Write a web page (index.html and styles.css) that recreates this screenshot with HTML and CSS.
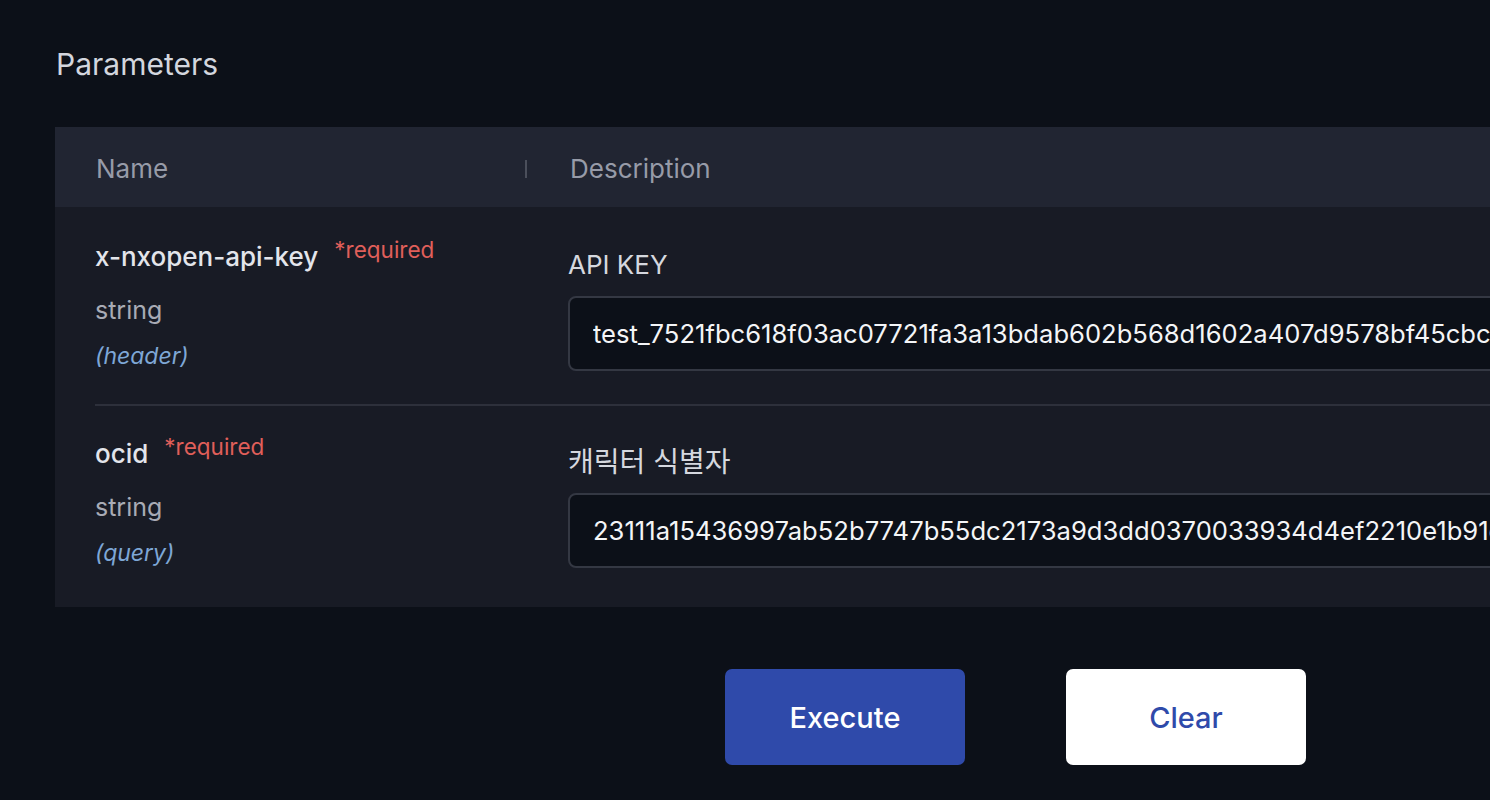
FILE: index.html
```html
<!DOCTYPE html>
<html lang="ko">
<head>
<meta charset="utf-8">
<title>Parameters</title>
<link rel="stylesheet" href="styles.css">
</head>
<body>
<div class="page">
  <h2 class="title">Parameters</h2>
  <div class="table">
    <div class="thead">
      <div class="th th-name"><span>Name</span><span class="divider"></span></div>
      <div class="th th-desc">Description</div>
    </div>
    <div class="tbody">
      <div class="row">
        <div class="cell-name">
          <div class="pname">x-nxopen-api-key<span class="req">*required</span></div>
          <div class="ptype">string</div>
          <div class="pin">(header)</div>
        </div>
        <div class="cell-desc">
          <div class="pdesc">API KEY</div>
          <input class="field" type="text" value="test_7521fbc618f03ac07721fa3a13bdab602b568d1602a407d9578bf45cbc0e9a0c7e6cefe8d04e6d233bd35cf2fabdeb93fb">
        </div>
      </div>
      <div class="row">
        <div class="cell-name">
          <div class="pname">ocid<span class="req">*required</span></div>
          <div class="ptype">string</div>
          <div class="pin">(query)</div>
        </div>
        <div class="cell-desc">
          <div class="pdesc pdesc-ko">캐릭터 식별자</div>
          <input class="field" type="text" value="23111a15436997ab52b7747b55dc2173a9d3dd0370033934d4ef2210e1b91e9b">
        </div>
      </div>
    </div>
  </div>
  <div class="actions">
    <button class="btn btn-exec">Execute</button>
    <button class="btn btn-clear">Clear</button>
  </div>
</div>
</body>
</html>
```

FILE: styles.css
```css
html, body {
  margin: 0;
  padding: 0;
  background: #0c1018;
  overflow: hidden;
}
body {
  font-family: Inter, "Noto Sans CJK KR", sans-serif;
  width: 1490px;
  height: 800px;
}
.page {
  width: 2000px;
  padding: 0 0 0 55px;
}
.title {
  margin: 0 0 43px;
  padding: 44px 0 0 1px;
  font-size: 30px;
  font-weight: 400;
  line-height: 40px;
  color: #d3d6de;
}
.table {
  width: 1935px;
  background: #181b25;
}
.thead {
  display: grid;
  grid-template-columns: 472px 1fr;
  height: 80px;
  background: #212532;
  align-items: center;
}
.th {
  font-size: 26px;
  line-height: 36px;
  color: #979ba8;
  padding-top: 3px;
}
.th-name {
  display: flex;
  align-items: center;
  justify-content: space-between;
  padding-left: 41px;
}
.divider {
  width: 2px;
  height: 18px;
  background: #4b4f5b;
}
.th-desc {
  padding-left: 43px;
}
.tbody {
  padding: 0 40px;
}
.row {
  display: grid;
  grid-template-columns: 432px 1fr;
  padding: 32px 0 30px;
  border-bottom: 2px solid #2d303b;
}
.row:last-child {
  border-bottom: none;
  padding-top: 30px;
  padding-bottom: 36px;
}
.pname {
  font-size: 26px;
  line-height: 36px;
  color: #e3e5eb;
  font-weight: 500;
}
.req {
  font-size: 22.5px;
  font-weight: 400;
  color: #e05f5a;
  margin-left: 16px;
  position: relative;
  top: -8px;
}
.ptype {
  margin-top: 16px;
  font-size: 25px;
  line-height: 36px;
  color: #a8abb5;
}
.pin {
  margin-top: 10px;
  font-size: 23px;
  line-height: 36px;
  font-style: italic;
  color: #7ea7d6;
}
.cell-desc {
  padding: 8px 0 0 41px;
  display: flex;
  flex-direction: column;
}
.pdesc {
  font-size: 26px;
  line-height: 36px;
  color: #d5d8df;
}
.pdesc-ko {
  font-size: 28px;
}
.field {
  margin-top: 13px;
  height: 75px;
  box-sizing: border-box;
  width: 1400px;
  background: #0c1018;
  border: 2px solid #343843;
  border-radius: 8px;
  padding: 0 23px;
  font-family: Inter, "Noto Sans CJK KR", sans-serif;
  font-size: 25.6px;
  color: #f4f5f7;
  outline: none;
}
.actions {
  display: flex;
  gap: 101px;
  padding: 62px 0 0 670px;
}
.btn {
  width: 240px;
  height: 96px;
  border-radius: 7px;
  border: none;
  font-family: Inter, sans-serif;
  font-size: 29px;
  font-weight: 500;
  cursor: pointer;
}
.btn-exec {
  background: #2f4aaa;
  color: #ffffff;
}
.btn-clear {
  background: #ffffff;
  color: #2f4aaa;
}
```
